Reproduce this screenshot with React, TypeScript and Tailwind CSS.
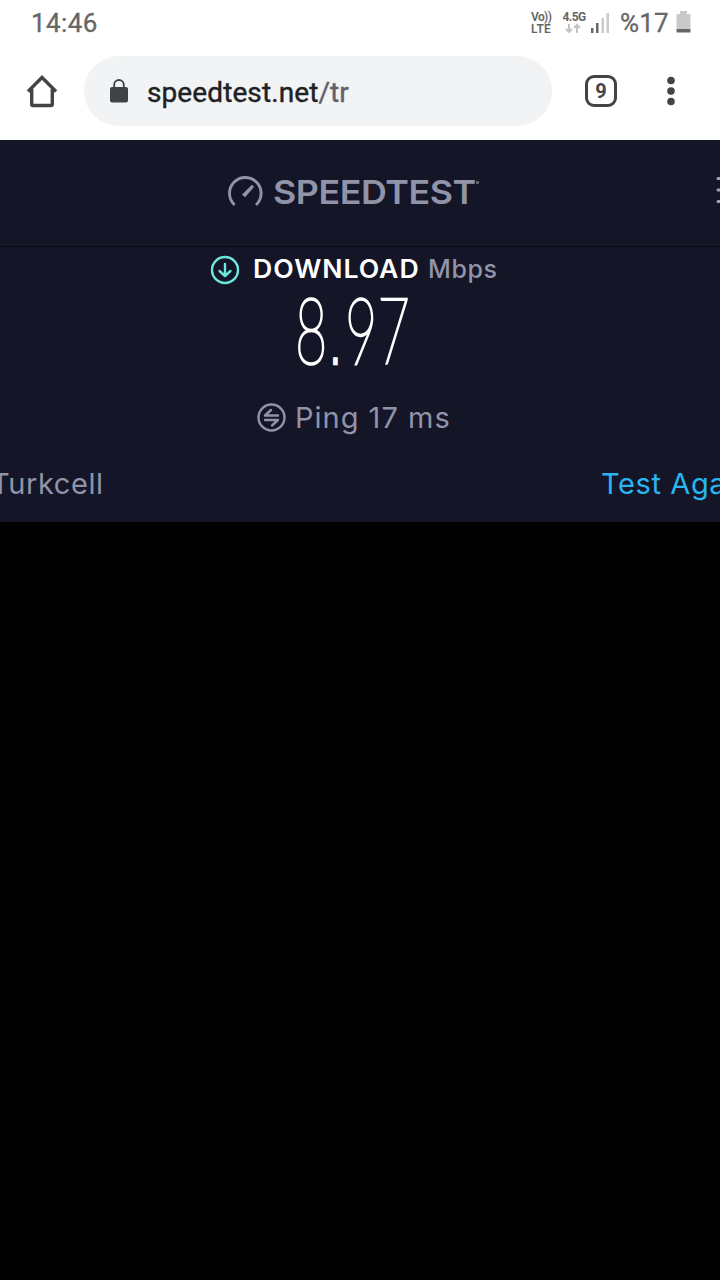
import React from "react";

const StatusBar: React.FC = () => {
  return (
    <div className="flex h-[46px] items-center pl-[31px] pr-[28px] text-[#666666]">
      <span className="text-[26px] leading-none tracking-[0.4px] [-webkit-text-stroke:0.3px]">14:46</span>
      <div className="ml-auto flex items-center pb-[1px]">
        <div className="flex w-[22px] flex-col text-[12px] font-semibold leading-[12px] whitespace-nowrap">
          <span className="tracking-[-0.6px]">Vo))</span>
          <span className="tracking-[0.3px]">LTE</span>
        </div>
        <div className="ml-[9px] flex w-[24px] flex-col items-center text-[12px] font-bold leading-[12px] tracking-[-0.6px]">
          <span>4.5G</span>
          {/* Data arrows */}
          <svg className="-ml-[2px]" width="16" height="11" viewBox="0 0 16 11" fill="none" stroke="#c4c4c4" strokeWidth="2">
            <path d="M4 1v8M1 6l3 3 3-3M12 10V2M9 5l3-3 3 3" />
          </svg>
        </div>
        {/* Signal */}
        <svg className="ml-[5px]" width="20" height="22" viewBox="0 0 20 22">
          <path d="M0 16h2.500v5H0z" fill="#666" />
          <path d="M5 11h2.500v10H5z" fill="#666" />
          <path d="M10.500 6H13v15h-2.500z" fill="#cacaca" />
          <path d="M15.500 1H18v20h-2.500z" fill="#cacaca" />
        </svg>
        <span className="ml-[9px] mt-[1px] w-[49px] text-[26px] leading-none tracking-[0.2px] [-webkit-text-stroke:0.3px]">%17</span>
        {/* Battery */}
        <svg className="mb-[2px] ml-[7px]" width="16" height="22" viewBox="0 0 16 22">
          <path d="M4 0h7v3h3.500v15H.5V3H4z" fill="#cacaca" />
          <path d="M.5 18h14v3.500H.5z" fill="#666" />
        </svg>
      </div>
    </div>
  );
};

const BrowserBar: React.FC = () => {
  return (
    <div className="flex h-[94px] items-center pb-[4px]">
      <svg className="ml-[26px]" width="32" height="34" viewBox="0 0 32 34" fill="none" stroke="#414548" strokeWidth="3.400">
        <path d="M2 17.500 16 3.500l14 14" />
        <path d="M5.700 15v15.200q0 1.300 1.300 1.300h18q1.300 0 1.300-1.300V15" />
      </svg>
      <div className="ml-[26px] flex h-[70px] w-[468px] items-center rounded-full bg-[#f1f3f4] pl-[26px]">
        <svg width="18" height="24" viewBox="0 0 18 24">
          <rect x="0" y="8" width="18" height="15.500" rx="2" fill="#3f4346" />
          <path d="M4.200 9V5.500a4.800 4.500 0 0 1 9.600 0V9" fill="none" stroke="#3f4346" strokeWidth="1.800" />
        </svg>
        <span className="ml-[19px] mt-[3px] text-[28px] leading-none text-[#202124] tracking-[0.1px] [-webkit-text-stroke:0.4px]">
          speedtest.net<span className="text-[#5f6368]">/tr</span>
        </span>
      </div>
      <div className="ml-[33px] flex h-[32px] w-[32px] items-center justify-center rounded-[9px] border-[3.5px] border-[#414548] text-[20px] font-bold leading-none text-[#414548]">
        9
      </div>
      <svg className="ml-[50px]" width="8" height="30" viewBox="0 0 8 30" fill="#414548">
        <circle cx="4" cy="4.500" r="3.800" />
        <circle cx="4" cy="15" r="3.800" />
        <circle cx="4" cy="25.500" r="3.800" />
      </svg>
    </div>
  );
};

const SiteHeader: React.FC = () => {
  return (
    <div className="flex h-[107px] items-center border-b border-[#090a16] pb-[4px] pl-[227px]">
      <svg width="36" height="36" viewBox="0 0 36 36" fill="none" stroke="#9193a8">
        <path d="M7.600 32A15.800 15.800 0 1 1 29 32" strokeWidth="2.900" />
        <path d="M15 21.500 25 11.700l2 2.200-8.400 9.800-1 .3z" fill="#9193a8" stroke="none" />
      </svg>
      <span className="ml-[10px] mt-[3px] w-[200px] origin-left scale-x-[1.085] text-[33px] font-semibold leading-none whitespace-nowrap tracking-[-0.4px]">
        SPEEDTEST
      </span>
      <span className="mb-[17px] ml-[3px] h-[3px] w-[3px] rounded-full bg-[#73758a]" />
      {/* Menu, cut off by the right edge */}
      <svg className="ml-auto" width="4" height="30" viewBox="0 0 4 30" stroke="#a0a1b4" strokeWidth="3" strokeLinecap="round">
        <path d="M2 2.500h6M2 14h6M2 25.500h6" />
      </svg>
    </div>
  );
};

const Results: React.FC = () => {
  return (
    <div className="flex h-[275px] flex-col">
      <div className="flex h-[45px] items-center pl-[210px]">
        <svg width="30" height="30" viewBox="0 0 30 30" fill="none" stroke="#6ee7df" strokeWidth="2.400" strokeLinecap="round" strokeLinejoin="round">
          <circle cx="15" cy="15" r="13" />
          <path d="M15 9v12M9.500 16l5.500 5 5.500-5" />
        </svg>
        <span className="ml-[13px] w-[166px] origin-left scale-x-[1.065] text-[25px] font-semibold leading-none text-white tracking-[0.9px]">DOWNLOAD</span>
        <span className="ml-[9px] text-[25px] font-medium leading-none tracking-[0.6px]">Mbps</span>
      </div>
      <div className="h-[85px] pl-[295px] font-[Lato] text-[92px] font-thin leading-[73px] text-white">
        <span className="inline-block origin-left scale-x-[0.605] whitespace-nowrap [-webkit-text-stroke:2.6px_white]">
          8<span className="ml-[6px] mr-[9px] font-['Liberation_Sans'] text-[52px] leading-none">.</span>97
        </span>
      </div>
      <div className="flex h-[82px] items-center pl-[256px]">
        <svg width="30" height="30" viewBox="0 0 30 30" fill="none" stroke="#9193a8" strokeWidth="2.400" strokeLinecap="round" strokeLinejoin="round">
          <circle cx="15.500" cy="14.500" r="13" />
          <path d="M22 12.500H9l6-5.500M9 17h13l-6 5.500" />
        </svg>
        <span className="mb-[2px] ml-[9px] text-[29px] leading-none whitespace-nowrap tracking-[1px]">Ping 17 ms</span>
      </div>
      <div className="flex h-[50px] items-center overflow-hidden whitespace-nowrap pb-[2px] text-[29px] leading-none tracking-[0.6px]">
        <span className="-ml-[9px]">Turkcell</span>
        <span className="-mr-[40px] ml-auto w-[159px] text-[#29b5f0]">Test Again</span>
      </div>
    </div>
  );
};

const App: React.FC = () => {
  return (
    <div className="h-[1280px] w-[720px] overflow-hidden bg-black">
      <div className="bg-white font-[Roboto,sans-serif]">
        <StatusBar />
        <BrowserBar />
      </div>
      <div className="bg-[#141526] font-[Inter,sans-serif] text-[#9193a8]">
        <SiteHeader />
        <Results />
      </div>
    </div>
  );
};

export default App;
